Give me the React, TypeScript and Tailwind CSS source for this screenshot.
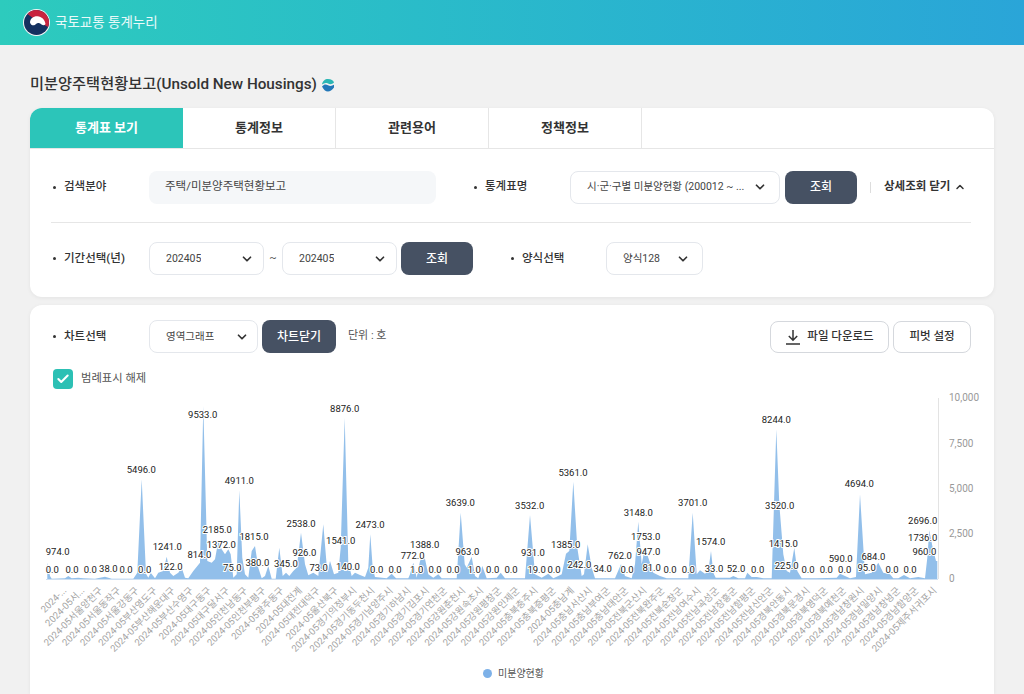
import React from "react";
import { ChevronDown, ChevronUp, Check } from "lucide-react";

const z2: number[][] = [[142,565],[142,515],[150,555],[155,563],[195,562],[205,555],[215,562],[235,560],[250,562],[285,563],[315,557],[335,563],[400,563],[412,545],[425,265],[438,548],[445,560],[452,545],[465,562],[475,545],[490,540],[500,497],[510,545],[520,555],[535,545],[545,530],[555,560],[565,562],[580,540],[600,515],[610,45],[622,510],[635,515],[645,505],[655,450],[665,475],[675,490],[685,475],[692,490],[700,560],[710,550],[718,298],[727,500],[735,550],[745,560],[755,480],[765,465],[775,530],[785,562],[795,555],[805,525],[815,563],[827,563],[838,470],[848,555],[858,545],[868,555],[880,540],[890,530],[903,425],[915,520],[925,553],[940,545],[955,555]];
const z3: number[][] = [[10,400],[22,545],[30,510],[42,550],[55,545],[62,470],[74,80],[85,515],[95,555],[105,545],[120,552],[135,558],[145,530],[151,430],[158,530],[165,558],[200,562],[215,548],[228,562],[265,562],[270,550],[280,515],[290,560],[300,510],[312,490],[325,550],[340,560],[355,550],[365,562],[410,562],[422,365],[434,520],[440,530],[455,497],[465,555],[475,562],[487,525],[500,562],[530,560],[542,545],[555,562],[615,562],[630,372],[645,550],[665,560],[685,548],[700,562],[715,555],[725,550],[738,488],[748,480],[760,272],[772,470],[785,555],[792,550],[803,460],[815,530],[825,562],[885,562],[903,520],[915,555],[935,562],[945,520],[955,392],[965,520],[975,470],[985,500],[1000,545]];
const z4: number[][] = [[30,555],[50,562],[115,562],[128,365],[140,550],[150,538],[165,548],[175,540],[183,480],[190,545],[197,560],[240,560],[250,555],[265,562],[285,562],[292,545],[305,558],[320,558],[340,562],[365,562],[379,115],[388,340],[400,490],[410,540],[420,545],[433,470],[442,540],[455,562],[500,562],[560,560],[570,548],[585,555],[600,562],[618,558],[630,310],[645,550],[665,545],[685,515],[700,545],[720,550],[730,562],[745,562],[762,552],[780,562],[805,558],[825,562],[832,500],[838,418],[848,470],[858,510],[862,510],[862,565]];

const areaPts = [
  ...z2.map(([x, y]) => [x / 3, 390 + y / 3]),
  ...z3.map(([x, y]) => [320 + x / 3, 390 + y / 3]),
  ...z4.map(([x, y]) => [650 + x / 3, 390 + y / 3]),
];
const areaD = "M" + areaPts.map(([x, y]) => `${x.toFixed(1)} ${y.toFixed(1)}`).join("L") + "Z";

const l2: [string, number, number][] = [["974.0",173,485],["0.0",157,537],["0.0",216,537],["0.0",271,537],["38.0",325,535],["0.0",378,537],["0.0",434,537],["5496.0",424,238],["1241.0",502,468],["122.0",512,530],["814.0",598,493],["9533.0",608,73],["2185.0",652,418],["1372.0",664,462],["4911.0",718,270],["75.0",697,533],["1815.0",762,438],["380.0",772,516],["345.0",858,519],["2538.0",903,400],["926.0",913,487],["73.0",956,533]];
const l3: [string, number, number][] = [["1541.0",62,452],["140.0",84,530],["8876.0",74,55],["2473.0",150,402],["0.0",170,537],["0.0",225,537],["772.0",278,496],["1.0",290,537],["1388.0",314,462],["0.0",345,537],["0.0",399,537],["3639.0",421,338],["963.0",442,485],["1.0",463,537],["0.0",518,537],["0.0",573,537],["3532.0",629,345],["931.0",639,488],["19.0",650,537],["0.0",702,537],["1385.0",737,462],["5361.0",759,247],["242.0",778,524],["34.0",848,535],["762.0",900,496],["0.0",921,537],["3148.0",955,366],["1753.0",977,440],["947.0",985,484],["81.0",995,533]];
const l4: [string, number, number][] = [["0.0",60,537],["0.0",115,537],["3701.0",128,336],["1574.0",182,453],["33.0",192,535],["52.0",258,535],["0.0",323,537],["8244.0",379,89],["3520.0",389,345],["1415.0",400,459],["225.0",410,525],["0.0",474,537],["0.0",529,537],["0.0",584,537],["590.0",572,505],["4694.0",628,281],["95.0",650,532],["684.0",670,500],["0.0",726,537],["0.0",780,537],["2696.0",818,391],["1736.0",818,443],["960.0",823,485]];
const labels = [
  ...l2.map(([t, x, y]) => [t, x / 3, 390 + y / 3] as const),
  ...l3.map(([t, x, y]) => [t, 320 + x / 3, 390 + y / 3] as const),
  ...l4.map(([t, x, y]) => [t, 650 + x / 3, 390 + y / 3] as const),
];

const names = ["2024-...","2024-05서...","서울양천구","서울동작구","서울강동구","부산영도구","부산해운대구","부산수영구","대구동구","대구달서구","인천남동구","인천부평구","광주동구","대전계","대전대덕구","울산북구","경기의정부시","경기동두천시","경기남양주시","경기하남시","경기김포시","경기연천군","강원춘천시","강원속초시","강원평창군","강원인제군","충북충주시","충북증평군","충남계","충남서산시","충남부여군","충남태안군","전북군산시","전북완주군","전북순창군","전남여수시","전남곡성군","전남장흥군","전남함평군","전남신안군","경북안동시","경북문경시","경북영덕군","경북예천군","경남창원시","경남밀양시","경남창녕군","경남함양군","제주서귀포시"];

const font = "font-['Roboto','Noto_Sans_CJK_KR',sans-serif]";

function Sel({ text, cls }: { text: string; cls: string }) {
  return (
    <div className={`flex h-[33px] items-center justify-between rounded-lg border border-[#e4e7ec] bg-white pl-4 text-[10.5px] text-[#444] ${cls}`}>
      <span className="truncate">{text}</span>
      <ChevronDown size={14} strokeWidth={3} className="shrink-0 text-[#333]" />
    </div>
  );
}

function Label({ text, cls }: { text: string; cls: string }) {
  return (
    <div className={`flex items-center text-[11.5px] font-medium text-[#333] ${cls}`}>
      <span className="mr-2 h-[3px] w-[3px] rounded-full bg-[#333]" />
      {text}
    </div>
  );
}

function Btn({ text, cls }: { text: string; cls: string }) {
  return (
    <div className={`flex h-[33px] items-center justify-center rounded-lg bg-[#465163] text-[12px] font-medium text-white ${cls}`}>{text}</div>
  );
}

export default function App() {
  return (
    <div className={`h-[694px] overflow-hidden bg-[#f1f1f1] ${font}`}>
      <header className="flex h-[45px] items-center bg-gradient-to-r from-[#2dcbbd] to-[#2aa5d8] pl-[23px]">
        <svg width="27" height="27" viewBox="0 0 27 27">
          <circle cx="13.5" cy="13.5" r="13.5" fill="#f4f4f4" />
          <circle cx="13.5" cy="13.5" r="12.5" fill="#14305f" />
          <path d="M4.5 5A12.5 12.5 0 0 1 26 13.5A12.5 12.5 0 0 1 25 18L14 12Z" fill="#c8233f" />
          <path d="M7 13.5C7 9.5 10.5 7 14.5 7.2C18.5 7.5 22 10.5 22.5 15C21.5 16.5 20 16.5 18.5 15.5C16.5 13.5 14.5 13.5 13 15C11.5 17 8 17 7 13.5Z" fill="#fff" />
        </svg>
        <span className="ml-[5px] text-[13.5px] text-white/90">국토교통 통계누리</span>
      </header>

      <main className="px-[30px] pt-[27px]">
        <div className="flex h-[24px] items-center text-[15.25px] font-medium text-[#333]">
          미분양주택현황보고(Unsold New Housings)
          <svg width="14" height="14" viewBox="0 0 14 14" className="ml-[4px] mt-[2px]">
            <path d="M1 8.5C3 6 5 6 7 7.2C9 8.4 11 8 13 6.8V9.5C11 12 9 13.5 7 13.5C4.5 13.5 2.5 11.5 1 8.5Z" fill="#2277b8" />
            <path d="M1 6.5C1.5 3 4 1 7 1C10 1 12.5 2.5 13 4.5C11 6.5 9 6.5 7 5.5C5 4.6 3 5 1 6.5Z" fill="#2bb6b4" />
          </svg>
        </div>

        <section className="mt-[12px] h-[189px] rounded-xl bg-white shadow-[0_1px_4px_rgba(0,0,0,0.06)]">
          <div className="flex h-[41px] border-b border-[#e6e6e6] text-[13px] font-bold text-[#333]">
            <div className="flex w-[153px] items-center justify-center rounded-tl-xl bg-[#2cc5b9] text-white">통계표 보기</div>
            <div className="flex w-[153px] items-center justify-center border-r border-[#e6e6e6]">통계정보</div>
            <div className="flex w-[153px] items-center justify-center border-r border-[#e6e6e6]">관련용어</div>
            <div className="flex w-[153px] items-center justify-center border-r border-[#e6e6e6]">정책정보</div>
          </div>

          <div className="ml-[21px] mr-[23px] flex h-[74px] items-center border-b border-[#e6e6e6] pt-[3px]">
            <Label text="검색분야" cls="w-[98px] pl-[2px]" />
            <div className="flex h-[33px] w-[287px] items-center rounded-lg bg-[#f5f7f9] pl-4 text-[11.5px] text-[#444]">주택/미분양주택현황보고</div>
            <Label text="통계표명" cls="ml-[38px] w-[96px]" />
            <Sel text="시·군·구별 미분양현황 (200012 ~ ..." cls="w-[210px] pr-[12px]" />
            <Btn text="조회" cls="ml-[5px] w-[72px]" />
            <div className="ml-[13px] h-[11px] w-px bg-[#ddd]" />
            <div className="ml-[13px] flex items-center text-[11.5px] font-bold text-[#333]">
              상세조회 닫기
              <ChevronUp size={12} strokeWidth={3} className="ml-[4px]" />
            </div>
          </div>

          <div className="ml-[21px] mr-[23px] flex h-[72px] items-center pb-[1px]">
            <Label text="기간선택(년)" cls="w-[98px] pl-[2px]" />
            <Sel text="202405" cls="w-[115px] pr-[9px]" />
            <span className="w-[18px] text-center text-[11px] text-[#555]">~</span>
            <Sel text="202405" cls="w-[115px] pr-[9px]" />
            <Btn text="조회" cls="ml-[4px] w-[72px]" />
            <Label text="양식선택" cls="ml-[38px] w-[95px]" />
            <Sel text="양식128" cls="w-[97px] pr-[12px]" />
          </div>
        </section>

        <section className="mt-[8px] h-[389px] rounded-t-xl bg-white pt-[15px] shadow-[0_1px_4px_rgba(0,0,0,0.06)]">
          <div className="ml-[21px] mr-[23px] flex items-center">
            <Label text="차트선택" cls="w-[98px] pl-[2px]" />
            <Sel text="영역그래프" cls="h-[32px] w-[109px] pr-[8px]" />
            <Btn text="차트닫기" cls="ml-[4px] h-[32px] w-[74px]" />
            <span className="ml-[12px] text-[11px] text-[#555]">단위 : 호</span>
            <div className="ml-auto flex h-[32px] w-[119px] items-center justify-center rounded-lg border border-[#d5d8dd] text-[11.5px] font-medium text-[#333]">
              <svg width="16" height="16" viewBox="0 0 16 16" fill="none" stroke="#333" strokeWidth="1.5" className="mr-[6px]">
                <path d="M8 1V11M3.8 7L8 11.2L12.2 7M1 15H15" />
              </svg>
              파일 다운로드
            </div>
            <div className="ml-[4px] flex h-[32px] w-[78px] items-center justify-center rounded-lg border border-[#d5d8dd] text-[11.5px] font-medium text-[#333]">피벗 설정</div>
          </div>
          <div className="mx-[23px] mt-[16px] flex h-[20px] items-center text-[11.3px] text-[#555]">
            <span className="flex h-[20px] w-[20px] items-center justify-center rounded bg-[#2cc0b4]">
              <Check size={14} strokeWidth={3.5} className="text-white" />
            </span>
            <span className="ml-[8px]">범례표시 해제</span>
          </div>
          <svg width="964" height="302" viewBox="30 392 964 302" className="mt-[4px] block">
            <path d={areaD} fill="#92bfea" />
            <line x1="46" y1="578.5" x2="938" y2="578.5" stroke="#cfe0f2" />
            <line x1="938.5" y1="397" x2="938.5" y2="578" stroke="#e3e3e3" />
            {[["10,000", 397], ["7,500", 443], ["5,000", 488], ["2,500", 533], ["0", 578]].map(([t, y]) => (
              <text key={t as string} x="949" y={y as number} dominantBaseline="middle" fontSize="10" fill="#999">{t}</text>
            ))}
            {labels.map(([t, x, y], i) => (
              <text key={i} x={x} y={y} textAnchor="middle" dominantBaseline="middle" fontSize="9.5" fill="#222" stroke="#fff" strokeWidth="2" paintOrder="stroke">{t}</text>
            ))}
            {names.map((n, i) => {
              const x = 67 + i * 18.13;
              const y = 590;
              return (
                <text key={i} x={x} y={y} textAnchor="end" fontSize="9.5" fill="#a3a3a3" transform={`rotate(-45 ${x} ${y})`}>
                  {i < 2 ? n : `2024-05${n}`}
                </text>
              );
            })}
            <circle cx="487.5" cy="672.5" r="4.5" fill="#7db1e8" />
            <text x="498" y="673" dominantBaseline="middle" fontSize="10" fill="#555">미분양현황</text>
          </svg>
        </section>
      </main>
    </div>
  );
}
